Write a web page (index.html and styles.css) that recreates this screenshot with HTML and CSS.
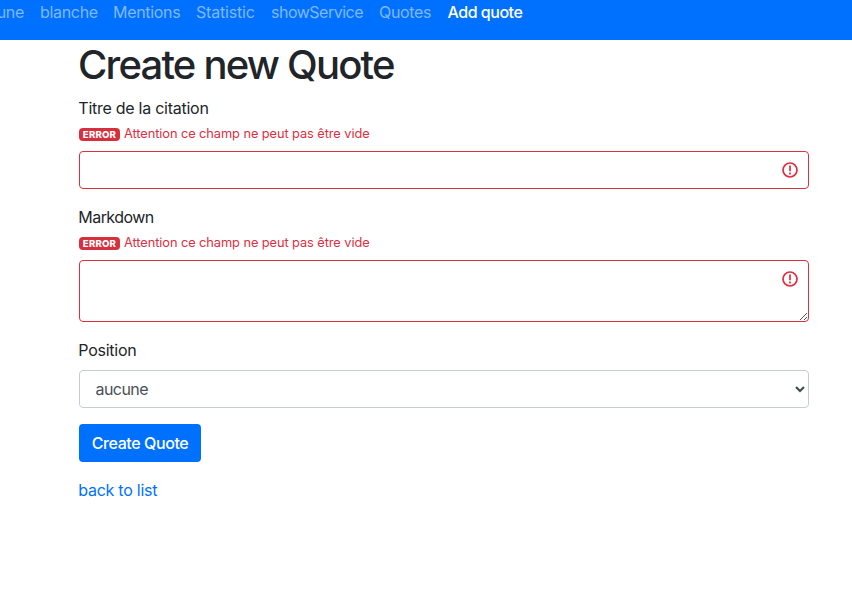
FILE: index.html
```html
<!DOCTYPE html>
<html lang="fr">
<head>
<meta charset="utf-8">
<title>Create new Quote</title>
<link rel="stylesheet" href="styles.css">
</head>
<body>
<nav class="navbar">
<a class="l1" href="#">aucune</a><a class="l2" href="#">blanche</a><a class="l3" href="#">Mentions</a><a class="l4" href="#">Statistic</a><a class="l5" href="#">showService</a><a class="l6" href="#">Quotes</a><a class="l7 active" href="#">Add quote</a>
</nav>
<main class="container">
<h1><span>Create new Quote</span></h1>
<form>
<div class="group">
<label for="title">Titre de la citation</label>
<div class="error"><span class="badge">ERROR</span><span class="message">Attention ce champ ne peut pas être vide</span></div>
<div class="field invalid"><input id="title" type="text"><svg class="alert" viewBox="0 0 16 16"><circle cx="8" cy="8" r="7"/><path d="M8 3.5v5.7M8 10.4v2"/></svg></div>
</div>
<div class="group">
<label class="tight" for="markdown">Markdown</label>
<div class="error"><span class="badge">ERROR</span><span class="message">Attention ce champ ne peut pas être vide</span></div>
<div class="field area invalid"><textarea id="markdown"></textarea><svg class="alert" viewBox="0 0 16 16"><circle cx="8" cy="8" r="7"/><path d="M8 3.5v5.7M8 10.4v2"/></svg><svg class="grip" viewBox="0 0 9 9"><path d="M1 8l7-7M5 8l3-3"/></svg></div>
</div>
<div class="group">
<label for="position">Position</label>
<div class="field"><select id="position"><option>aucune</option></select><svg class="chevron" viewBox="0 0 10 7"><path d="M1 1l4 4 4-4"/></svg></div>
</div>
<button type="button"><span>Create Quote</span></button>
</form>
<a class="back" href="#">back to list</a>
</main>
</body>
</html>
```
FILE: styles.css
```css
* { box-sizing: border-box; }
body { margin: 0; background: #fff; color: #212529; font: 16px/24px Inter, sans-serif; overflow: hidden; }
a { color: #0071ff; text-decoration: none; }
.navbar { height: 40px; background: #0071ff; display: flex; gap: 16px; white-space: nowrap; }
.navbar a { color: #80b8ff; flex: none; letter-spacing: -.32px; }
.navbar .l1 { margin-left: -32px; width: 56px; text-align: right; }
.navbar .l2 { width: 57px; }
.navbar .l3 { width: 67px; }
.navbar .l4 { width: 59px; letter-spacing: -.2px; }
.navbar .l5 { width: 92px; letter-spacing: -.5px; }
.navbar .l6 { width: 52.5px; }
.navbar .active { color: #fff; font-weight: 500; letter-spacing: -.48px; }
.container { width: 730px; margin-left: 79px; }
h1 { margin: 0 0 8px -1px; padding-top: 1px; height: 48px; font-size: 40px; line-height: 48px; font-weight: 530; letter-spacing: -1.8px; }
.group { margin-bottom: 16px; }
label { display: block; height: 24px; margin: 0 0 8px -.7px; letter-spacing: -.26px; }
.tight { letter-spacing: -.55px; }
.error { height: 24px; margin: -6px 0 5px; display: flex; align-items: center; gap: 4px; color: #dc2f3f; font-size: 12.8px; letter-spacing: -.07px; }
.badge { width: 41px; height: 13px; border-radius: 4px; background: #d62f3e; color: #fff; font-size: 9.6px; line-height: 13px; font-weight: 800; letter-spacing: .2px; text-align: center; }
.field { position: relative; height: 38px; }
.area { height: 62px; }
input, textarea, select { appearance: none; display: block; width: 100%; height: 100%; margin: 0; padding: 6px 15.5px; border: 1px solid #c6cbd6; border-radius: 4px; background: #fff; color: #495057; font: inherit; letter-spacing: -.55px; resize: none; outline: none; }
.invalid input, .invalid textarea { border-color: #dc2f3f; }
svg { position: absolute; fill: none; }
.alert { width: 16px; height: 16px; right: 11px; top: 11px; stroke: #dc2f3f; stroke-width: 1.7; }
.grip { width: 9px; height: 9px; right: 1px; bottom: 1px; stroke: #555; stroke-width: 1; }
.chevron { width: 10px; height: 7px; right: 4px; top: 16px; stroke: #404850; stroke-width: 2; }
button { display: block; width: 122px; height: 38px; padding: 0; border: 0; border-radius: 4px; background: #0071ff; color: #fff; font: inherit; font-weight: 500; letter-spacing: -.4px; }
.back { display: block; width: max-content; margin: 16px 0 0 -.7px; letter-spacing: -.26px; }
```
